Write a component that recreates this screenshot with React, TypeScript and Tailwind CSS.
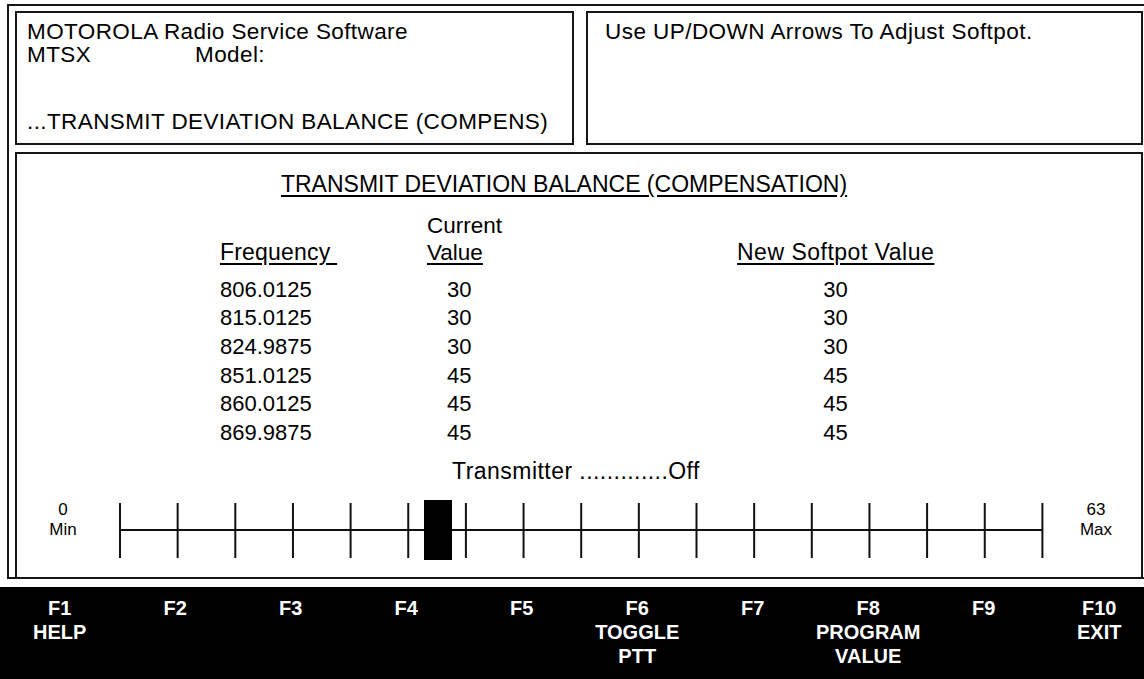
const rows = [
  { freq: '806.0125', current: '30', next: '30' },
  { freq: '815.0125', current: '30', next: '30' },
  { freq: '824.9875', current: '30', next: '30' },
  { freq: '851.0125', current: '45', next: '45' },
  { freq: '860.0125', current: '45', next: '45' },
  { freq: '869.9875', current: '45', next: '45' },
];

const keys = [
  { key: 'F1', lines: ['HELP'] },
  { key: 'F2', lines: [] },
  { key: 'F3', lines: [] },
  { key: 'F4', lines: [] },
  { key: 'F5', lines: [] },
  { key: 'F6', lines: ['TOGGLE', 'PTT'] },
  { key: 'F7', lines: [] },
  { key: 'F8', lines: ['PROGRAM', 'VALUE'] },
  { key: 'F9', lines: [] },
  { key: 'F10', lines: ['EXIT'] },
];

const TICKS = 17;
const TRACK_START = 9;
const TICK_GAP = 57.65;

// the track is a drawing: 17 ticks, a thin rail and the black thumb
const SoftpotSlider = ({ value }: { value: number }) => {
  const end = TRACK_START + TICK_GAP * (TICKS - 1);
  const thumbX = 313;
  return (
    <svg width="940" height="62" viewBox="0 0 940 62" className="block">
      <line x1={TRACK_START} y1="30" x2={end} y2="30" stroke="#111" strokeWidth="2" />
      {Array.from({ length: TICKS }).map((_, i) => {
        const x = TRACK_START + i * TICK_GAP;
        return <line key={i} x1={x} y1="3" x2={x} y2="58" stroke="#111" strokeWidth="2" />;
      })}
      <rect x={thumbX} y="0" width="28" height="60" fill="#000" data-value={value} />
    </svg>
  );
};

export default function App() {
  return (
    <div className="w-[1144px] h-[679px] bg-white overflow-hidden text-black font-['Liberation_Sans',Arial,sans-serif]">
      <div className="h-[587px] pt-[4px] pl-[7px]">
        <div className="w-[1145px] h-[575px] border-2 border-r-0 border-neutral-900 pt-[5px] pl-[6px] flex flex-col">
          <div className="flex gap-[12px]">
            <div className="w-[559px] h-[134px] border-2 border-neutral-900 pl-[10px] pt-[7px] text-[22.5px] leading-[23px] tracking-[0.4px]">
              <div>MOTOROLA Radio Service Software</div>
              <div className="flex">
                <span className="w-[168px]">MTSX</span>
                <span>Model:</span>
              </div>
              <div className="mt-[44px]">...TRANSMIT DEVIATION BALANCE (COMPENS)</div>
            </div>
            <div className="w-[557px] h-[134px] border-2 border-neutral-900 pl-[17px] pt-[7px] text-[22.5px] leading-[23px] tracking-[0.45px]">
              Use UP/DOWN Arrows To Adjust Softpot.
            </div>
          </div>

          <div className="mt-[7px] w-[1128px] flex-1 min-h-0 border-2 border-b-0 border-neutral-900 flex flex-col text-[22px] leading-[23px]">
            <div className="pt-[19px] pr-[30px] text-center text-[23px] underline underline-offset-[3px]">
              TRANSMIT DEVIATION BALANCE (COMPENSATION)
            </div>

            <div className="mt-[18px] pl-[203px] grid grid-cols-[207px_310px_197px] whitespace-nowrap">
              <div />
              <div className="text-[22.5px]">Current</div>
              <div />
              <div className="mt-[4px] text-[23px] tracking-[0.2px] underline underline-offset-[3px]">{'Frequency\u00a0'}</div>
              <div className="mt-[4px] text-[22.5px] underline underline-offset-[3px]">Value</div>
              <div className="mt-[4px] text-center text-[23px] underline underline-offset-[3px] tracking-[0.5px]">New Softpot Value</div>
            </div>

            <div className="mt-[8px] pl-[203px] grid grid-cols-[207px_310px_197px]">
              {rows.map((r) => (
                <div key={r.freq} className="contents">
                  <div className="mt-[5.7px]">{r.freq}</div>
                  <div className="mt-[5.7px] pl-[20px]">{r.current}</div>
                  <div className="mt-[5.7px] text-center">{r.next}</div>
                </div>
              ))}
            </div>

            <div className="mt-[16px] pr-[6px] text-center text-[23px] tracking-[0.45px]">Transmitter .............Off</div>

            <div className="mt-[17px] flex items-start">
              <div className="w-[94px] pr-[2px] text-center text-[17px] leading-[20px]">
                <div>0</div>
                <div>Min</div>
              </div>
              <SoftpotSlider value={23} />
              <div className="w-[90px] text-center text-[17px] leading-[20px]">
                <div>63</div>
                <div>Max</div>
              </div>
            </div>
          </div>
        </div>
      </div>

      <div className="h-[92px] bg-black pl-[2px] pt-[9px] grid grid-cols-[repeat(10,115.5px)] text-white font-bold text-[20px] leading-[24px] font-['Liberation_Sans_Narrow','Liberation_Sans',Arial,sans-serif]">
        {keys.map((k) => (
          <div key={k.key} className="text-center">
            <div>{k.key}</div>
            {k.lines.map((l) => (
              <div key={l}>{l}</div>
            ))}
          </div>
        ))}
      </div>
    </div>
  );
}
